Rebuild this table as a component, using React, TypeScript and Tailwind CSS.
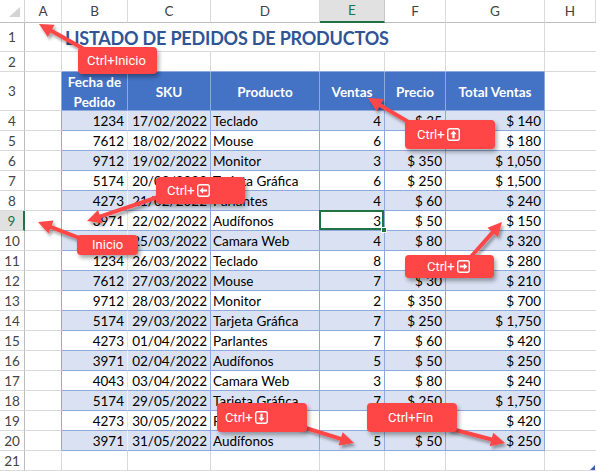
import React from "react";

const data: string[][] = [
  ["1234", "17/02/2022", "Teclado", "4", "$ 35", "$ 140"],
  ["7612", "18/02/2022", "Mouse", "6", "$ 30", "$ 180"],
  ["9712", "19/02/2022", "Monitor", "3", "$ 350", "$ 1,050"],
  ["5174", "20/02/2022", "Tarjeta Gráfica", "6", "$ 250", "$ 1,500"],
  ["4273", "21/02/2022", "Parlantes", "4", "$ 60", "$ 240"],
  ["3971", "22/02/2022", "Audífonos", "3", "$ 50", "$ 150"],
  ["4043", "25/03/2022", "Camara Web", "4", "$ 80", "$ 320"],
  ["1234", "26/03/2022", "Teclado", "8", "$ 35", "$ 280"],
  ["7612", "27/03/2022", "Mouse", "7", "$ 30", "$ 210"],
  ["9712", "28/03/2022", "Monitor", "2", "$ 350", "$ 700"],
  ["5174", "29/03/2022", "Tarjeta Gráfica", "7", "$ 250", "$ 1,750"],
  ["4273", "01/04/2022", "Parlantes", "7", "$ 60", "$ 420"],
  ["3971", "02/04/2022", "Audífonos", "5", "$ 50", "$ 250"],
  ["4043", "03/04/2022", "Camara Web", "3", "$ 80", "$ 240"],
  ["5174", "29/05/2022", "Tarjeta Gráfica", "7", "$ 250", "$ 1,750"],
  ["4273", "30/05/2022", "Parlantes", "7", "$ 60", "$ 420"],
  ["3971", "31/05/2022", "Audífonos", "5", "$ 50", "$ 250"],
];

function KeyIcon({ dir }: { dir: "up" | "down" | "left" | "right" }) {
  const rot = { up: 0, right: 90, down: 180, left: 270 }[dir];
  return (
    <svg width="13" height="13" viewBox="0 0 13 13" className="ml-[2px] shrink-0">
      <rect x="0.75" y="0.75" width="11.5" height="11.5" rx="2" fill="none" stroke="white" strokeWidth="1.4" />
      <g transform={`rotate(${rot} 6.5 6.5)`}>
        <path d="M6.5 2.6 L9.7 6.2 H7.6 V10.2 H5.4 V6.2 H3.3 Z" fill="white" />
      </g>
    </svg>
  );
}

function Arrow({ x1, y1, x2, y2 }: { x1: number; y1: number; x2: number; y2: number }) {
  const dx = x2 - x1;
  const dy = y2 - y1;
  const len = Math.sqrt(dx * dx + dy * dy);
  const ux = dx / len;
  const uy = dy / len;
  const L = 14;
  const W = 7;
  const bx = x2 - ux * L;
  const by = y2 - uy * L;
  const px = -uy;
  const py = ux;
  const pts = `${x2},${y2} ${bx + px * W},${by + py * W} ${bx - px * W},${by - py * W}`;
  return (
    <g filter="url(#ash)">
      <line x1={x1} y1={y1} x2={bx + ux * 2} y2={by + uy * 2} stroke="#ff4646" strokeWidth="4" />
      <polygon points={pts} fill="#ff4646" />
    </g>
  );
}

export default function App() {
  const letters = ["A", "B", "C", "D", "E", "F", "G", "H"];
  const cells: React.ReactNode[] = [];

  cells.push(
    <div key="corner" className="relative bg-white border-r border-b border-r-[#d4d4d4] border-b-[#bdbdbd]">
      <div className="absolute right-[4px] bottom-[5px] w-0 h-0 border-l-[11px] border-l-transparent border-b-[10px] border-b-[#d4d4d4]" />
    </div>
  );
  letters.forEach((l) => {
    cells.push(
      <div
        key={"h" + l}
        className={
          l === "E"
            ? "flex items-center justify-center bg-[#e1e1e1] text-[#217346] border-r border-r-[#c6c6c6] border-b-2 border-b-[#217346]"
            : "flex items-center justify-center bg-white text-[#444] border-r border-r-[#dadada] border-b border-b-[#bdbdbd]"
        }
      >
        {l}
      </div>
    );
  });

  for (let r = 1; r <= 21; r++) {
    const inTable = r >= 3 && r <= 20;
    // row header
    cells.push(
      <div
        key={"r" + r}
        className={
          r === 9
            ? "flex items-center justify-center pt-[1px] bg-[#e1e1e1] text-[#217346] border-r-2 border-b border-r-[#217346] border-b-[#d4d4d4]"
            : "flex items-center justify-center pt-[1px] bg-white text-[#444] border-r border-b border-r-[#bdbdbd] border-b-[#dadada]"
        }
      >
        {r}
      </div>
    );
    // column A
    cells.push(
      <div
        key={"a" + r}
        className={
          inTable
            ? "border-r border-b border-r-[#8ea9db] border-b-[#d9d9d9]"
            : r === 2
            ? "border-r border-b border-r-[#d9d9d9] border-b-[#d9d9d9]"
            : "border-r border-b border-r-[#d9d9d9] border-b-[#d9d9d9]"
        }
      />
    );
    // columns B..G
    for (let c = 0; c < 6; c++) {
      const k = `c${r}-${c}`;
      if (r === 1) {
        cells.push(
          <div
            key={k}
            className={
              c === 0
                ? "relative flex items-end pb-[4px] pl-[3px] whitespace-nowrap border-b border-b-[#d9d9d9] border-r border-r-transparent"
                : c < 4
                ? "border-b border-b-[#d9d9d9] border-r border-r-transparent"
                : "border-b border-b-[#d9d9d9] border-r border-r-[#d9d9d9]"
            }
          >
            {c === 0 && (
              <span className="font-[Lato,sans-serif] font-bold text-[18px] leading-none tracking-[-0.2px] text-[#2f5597]">
                LISTADO DE PEDIDOS DE PRODUCTOS
              </span>
            )}
          </div>
        );
        continue;
      }
      if (r === 2) {
        cells.push(<div key={k} className="border-r border-b border-r-[#d9d9d9] border-b-[#8ea9db]" />);
        continue;
      }
      if (r === 3) {
        const hdr = ["Fecha de Pedido", "SKU", "Producto", "Ventas", "Precio", "Total Ventas"][c];
        cells.push(
          <div
            key={k}
            className="flex items-center justify-center text-center bg-[#4472c4] text-white font-bold leading-[20px] border-r border-b border-r-[#8ea9db] border-b-[#8ea9db]"
          >
            {c === 0 ? (
              <span className="pt-[1px]">
                Fecha de
                <br />
                Pedido
              </span>
            ) : (
              <span className="pt-[1px]">{hdr}</span>
            )}
          </div>
        );
        continue;
      }
      if (r >= 4 && r <= 20) {
        const row = data[r - 4];
        const blue = (r - 4) % 2 === 0;
        const bg = blue ? "bg-[#d9e1f2]" : "bg-white";
        let cls = "";
        if (c === 0) {
          cls = blue
            ? "flex items-center justify-end pr-[3px] pt-[2px] border-b border-b-[#8ea9db] border-r border-r-[#eef1f8]"
            : "flex items-center justify-end pr-[3px] pt-[2px] border-b border-b-[#8ea9db] border-r border-r-[#e4e4e4]";
        } else if (c === 2) {
          cls = "flex items-center justify-start pl-[2px] pt-[2px] whitespace-nowrap border-r border-b border-r-[#8ea9db] border-b-[#8ea9db]";
        } else {
          cls = "flex items-center justify-end pr-[3px] pt-[2px] whitespace-nowrap border-r border-b border-r-[#8ea9db] border-b-[#8ea9db]";
        }
        const selected = r === 9 && c === 3;
        cells.push(
          <div key={k} className={`${bg} ${cls} ${selected ? "relative" : ""}`}>
            {row[c]}
            {selected && (
              <>
                <div className="absolute -left-[1px] -top-[1px] -right-[0px] -bottom-[0px] border-2 border-[#217346] z-10" />
                <div className="absolute -right-[3px] -bottom-[3px] w-[6px] h-[6px] bg-[#217346] border border-white z-10" />
              </>
            )}
            {r === 20 && c === 5 && (
              <div className="absolute right-[1px] bottom-[1px] w-0 h-0 border-l-[5px] border-l-transparent border-b-[5px] border-b-[#3a5fae]" />
            )}
          </div>
        );
        continue;
      }
      // row 21
      cells.push(<div key={k} className="border-r border-b border-r-[#d9d9d9] border-b-[#d9d9d9]" />);
    }
    // column H
    cells.push(<div key={"hh" + r} className="border-b border-b-[#d9d9d9]" />);
  }

  return (
    <div className="relative w-[596px] h-[471px] overflow-hidden bg-white font-[Lato,sans-serif] text-[13.5px] text-black">
      <div className="grid grid-cols-[25px_37px_66px_83px_109px_65px_61px_99px_51px] grid-rows-[23px_29px_20px_39px_repeat(18,20px)]">
        {cells.map((c, i) => (
          <React.Fragment key={i}>{c}</React.Fragment>
        ))}
      </div>

      <svg className="absolute inset-0 pointer-events-none z-20" width="596" height="471" viewBox="0 0 596 471">
        <defs>
          <filter id="ash" x="-30%" y="-30%" width="160%" height="160%">
            <feDropShadow dx="2" dy="3" stdDeviation="1.6" floodColor="#000" floodOpacity="0.35" />
          </filter>
        </defs>
        <Arrow x1={100} y1={58} x2={39} y2={24} />
        <Arrow x1={422} y1={130} x2={368} y2={98} />
        <Arrow x1={170} y1={193} x2={87} y2={221} />
        <Arrow x1={95} y1={244} x2={38} y2={222} />
        <Arrow x1={468} y1={260} x2={502} y2={222} />
        <Arrow x1={296} y1={425} x2={354} y2={443} />
        <Arrow x1={448} y1={428} x2={505} y2={443} />
      </svg>

      <div className="absolute inset-0 z-30 pointer-events-none font-[Roboto,sans-serif] text-[13px] text-white">
        <div className="absolute left-[78px] top-[47px] w-[79px] h-[27px] rounded-[4px] bg-[#ff4646] shadow-[2px_3px_4px_rgba(0,0,0,0.35)] flex items-center justify-start pl-[9px]">
          Ctrl+Inicio
        </div>
        <div className="absolute left-[405px] top-[120px] w-[90px] h-[29px] rounded-[4px] bg-[#ff4646] shadow-[2px_3px_4px_rgba(0,0,0,0.35)] flex items-center justify-start pl-[12px]">
          Ctrl+
          <KeyIcon dir="up" />
        </div>
        <div className="absolute left-[156px] top-[177px] w-[89px] h-[27px] rounded-[4px] bg-[#ff4646] shadow-[2px_3px_4px_rgba(0,0,0,0.35)] flex items-center justify-start pl-[11px]">
          Ctrl+
          <KeyIcon dir="left" />
        </div>
        <div className="absolute left-[77px] top-[235px] w-[61px] h-[20px] rounded-[4px] bg-[#ff4646] shadow-[2px_3px_4px_rgba(0,0,0,0.35)] flex items-center justify-start pl-[15px]">
          Inicio
        </div>
        <div className="absolute left-[405px] top-[255px] w-[89px] h-[23px] rounded-[4px] bg-[#ff4646] shadow-[2px_3px_4px_rgba(0,0,0,0.35)] flex items-center justify-start pl-[22px]">
          Ctrl+
          <KeyIcon dir="right" />
        </div>
        <div className="absolute left-[217px] top-[403px] w-[90px] h-[29px] rounded-[4px] bg-[#ff4646] shadow-[2px_3px_4px_rgba(0,0,0,0.35)] flex items-center justify-start pl-[8px]">
          Ctrl+
          <KeyIcon dir="down" />
        </div>
        <div className="absolute left-[367px] top-[403px] w-[90px] h-[29px] rounded-[4px] bg-[#ff4646] shadow-[2px_3px_4px_rgba(0,0,0,0.35)] flex items-center justify-start pl-[21px]">
          Ctrl+Fin
        </div>
      </div>
    </div>
  );
}
